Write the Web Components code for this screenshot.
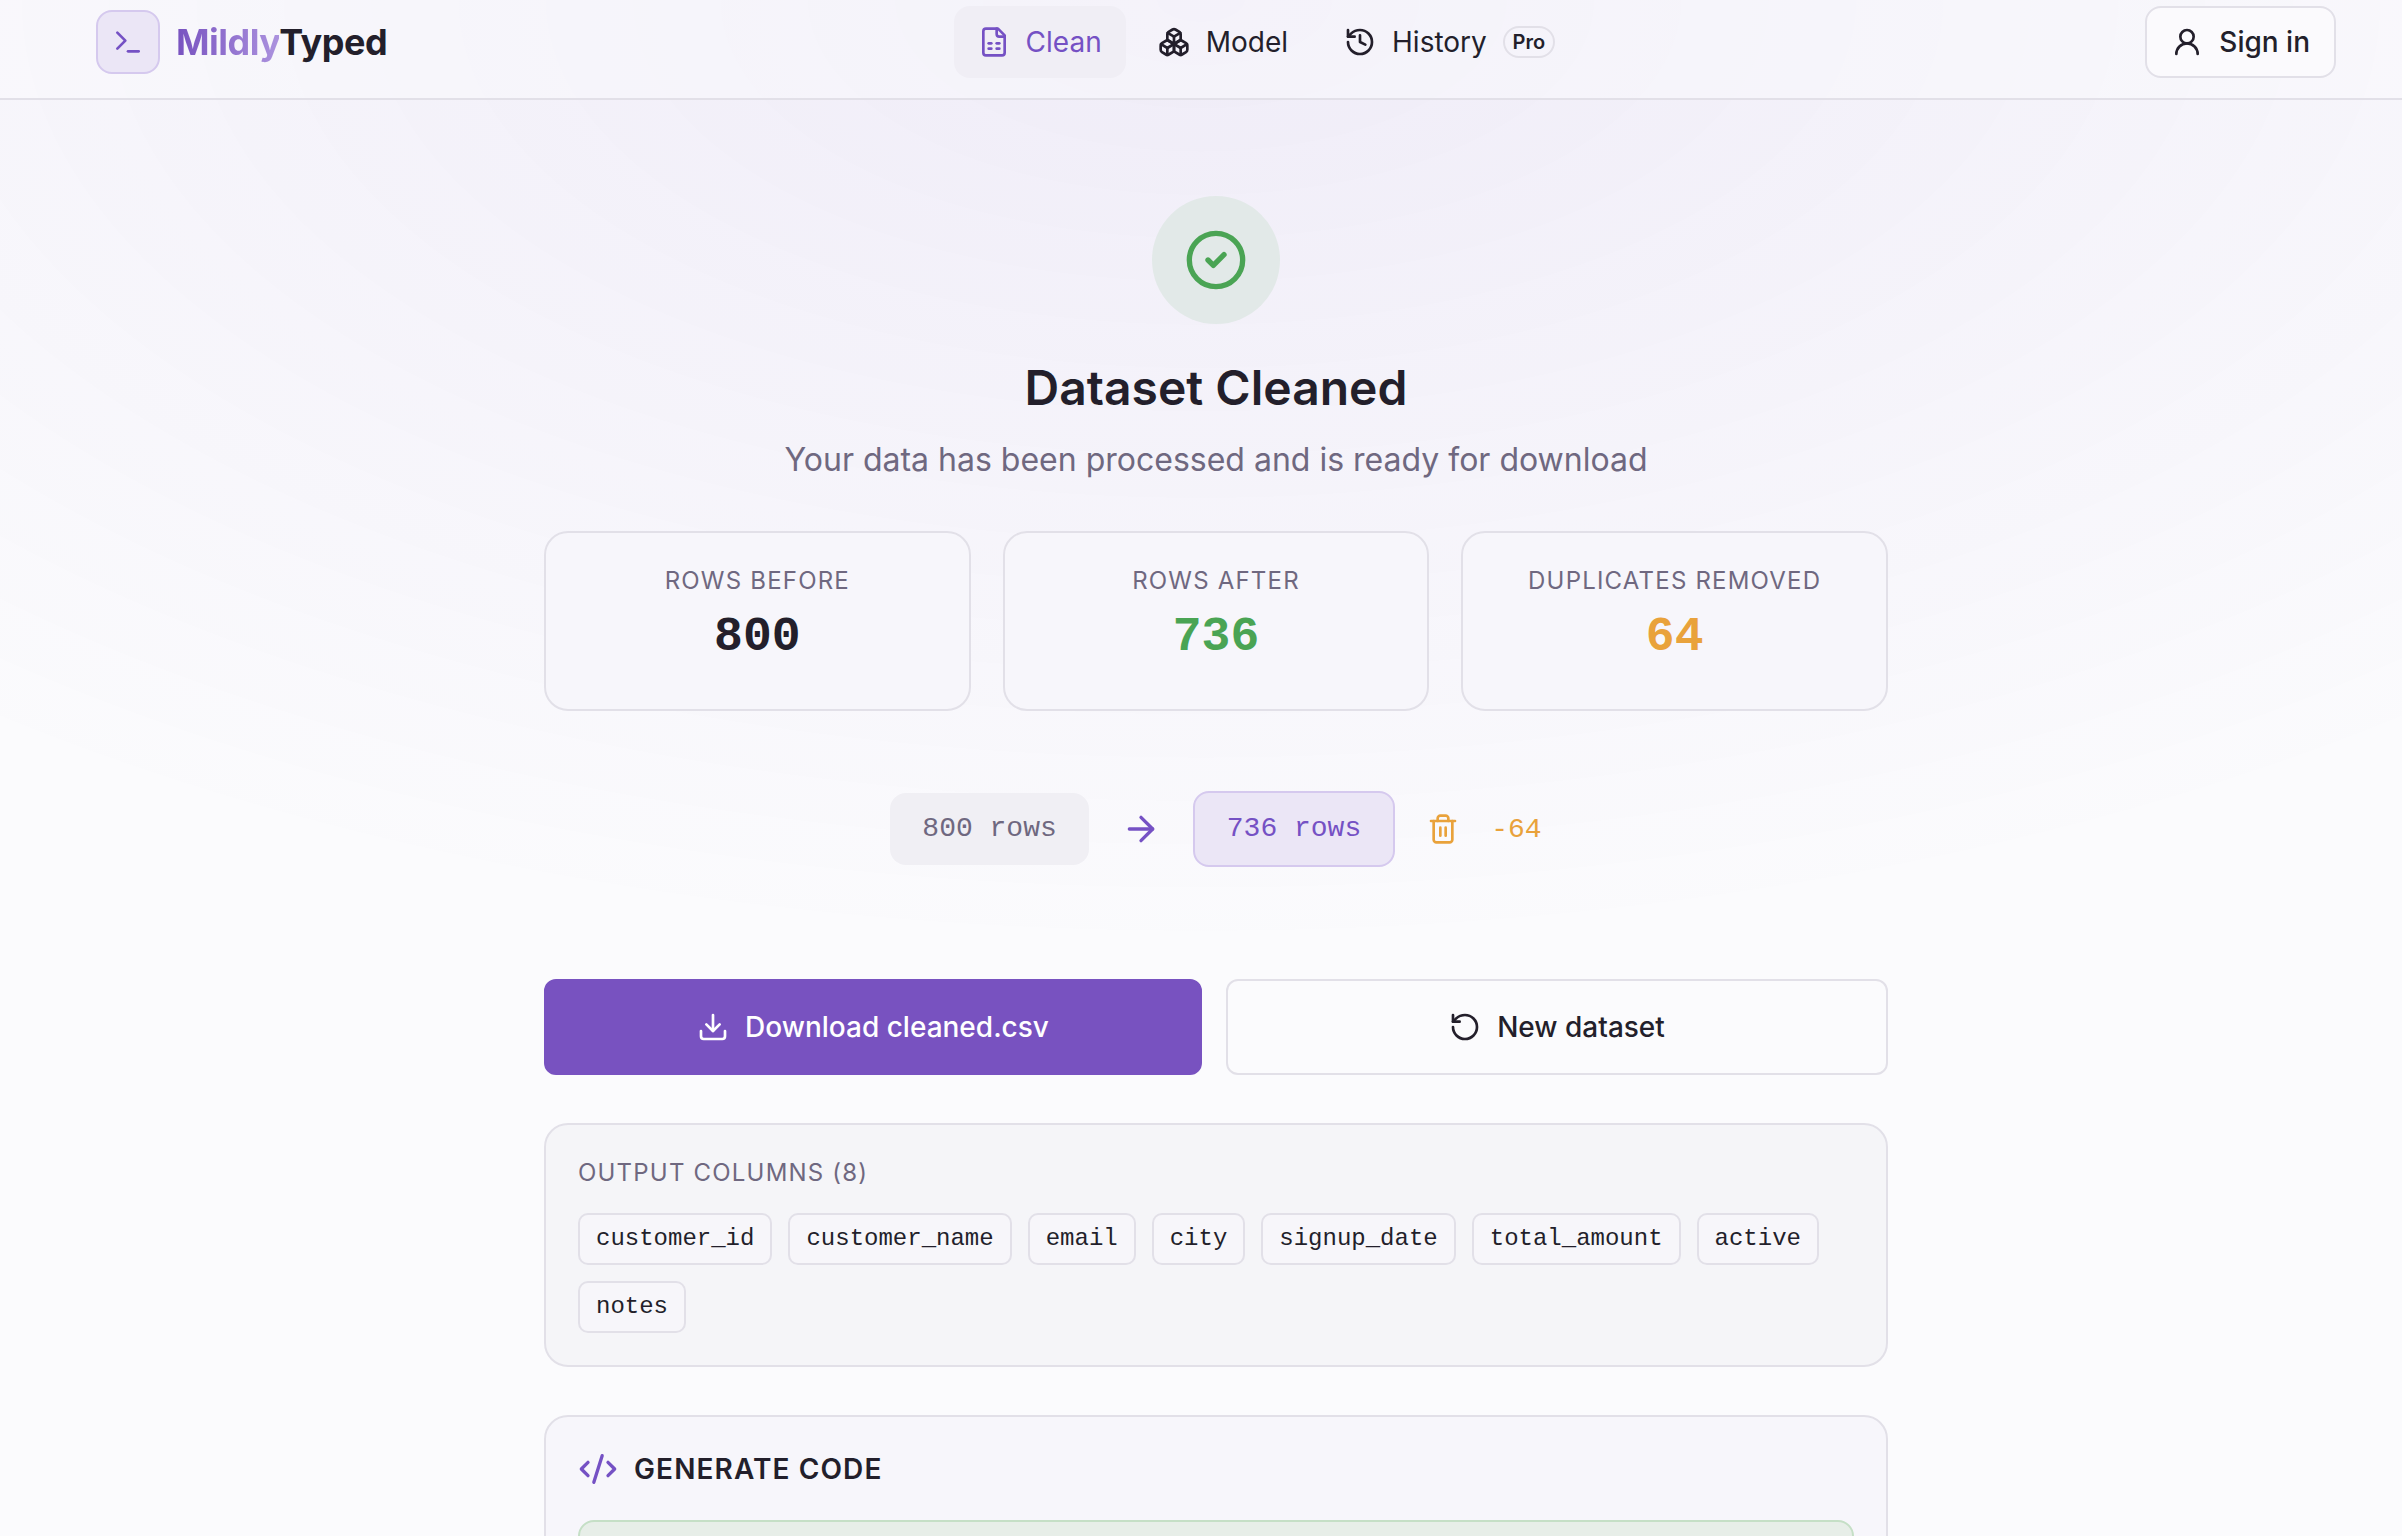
<!DOCTYPE html>
<html lang="en">
<head>
<meta charset="utf-8">
<title>MildlyTyped</title>
<style>
    html { overflow: hidden; height: 1536px; }
    body {
        margin: 0;
        width: 2432px;
        height: 1536px;
        overflow: hidden;
        font-family: Inter, "Liberation Sans", sans-serif;
        color: #231f2b;
        background-color: #fbfbfd;
        background-image: radial-gradient(ellipse 80% 62% at 50% 0, rgba(120, 82, 192, 0.085), rgba(120, 82, 192, 0));
    }
</style>
</head>
<body>
<mt-header></mt-header>
<mt-main>
    <mt-success title="Dataset Cleaned" text="Your data has been processed and is ready for download"></mt-success>
    <mt-stats>
        <stat-card label="ROWS BEFORE" value="800"></stat-card>
        <stat-card label="ROWS AFTER" value="736" color="#4aa454"></stat-card>
        <stat-card label="DUPLICATES REMOVED" value="64" color="#e9a23b"></stat-card>
    </mt-stats>
    <diff-row></diff-row>
    <mt-actions>
        <action-button primary icon="download" style="flex: 658 0 0">Download cleaned.csv</action-button>
        <action-button icon="rotate" style="flex: 662 0 0">New dataset</action-button>
    </mt-actions>
    <columns-card label="OUTPUT COLUMNS (8)">
        <col-chip>customer_id</col-chip>
        <col-chip>customer_name</col-chip>
        <col-chip>email</col-chip>
        <col-chip>city</col-chip>
        <col-chip>signup_date</col-chip>
        <col-chip>total_amount</col-chip>
        <col-chip>active</col-chip>
        <col-chip>notes</col-chip>
    </columns-card>
    <code-card></code-card>
</mt-main>

<script>
const MONO = '"Liberation Mono", monospace';

const ICONS = {
    terminal: '<path d="m4 17 6-6-6-6"/><path d="M12 19h8"/>',
    file: '<path d="M15 2H6a2 2 0 0 0-2 2v16a2 2 0 0 0 2 2h12a2 2 0 0 0 2-2V7Z"/><path d="M14 2v4a2 2 0 0 0 2 2h4"/><path d="M8 13h2"/><path d="M14 13h2"/><path d="M8 17h2"/><path d="M14 17h2"/>',
    boxes: '<path d="M2.97 12.92A2 2 0 0 0 2 14.63v3.24a2 2 0 0 0 .97 1.71l3 1.8a2 2 0 0 0 2.06 0L12 19v-5.5l-5-3-4.03 2.42Z"/><path d="m7 16.5-4.74-2.85"/><path d="m7 16.5 5-3"/><path d="M7 16.5v5.17"/><path d="M12 13.5V19l3.97 2.38a2 2 0 0 0 2.06 0l3-1.8a2 2 0 0 0 .97-1.71v-3.24a2 2 0 0 0-.97-1.71L17 10.5l-5 3Z"/><path d="m17 16.5-5-3"/><path d="m17 16.5 4.74-2.85"/><path d="M17 16.5v5.17"/><path d="M7.97 4.42A2 2 0 0 0 7 6.13v4.37l5 3 5-3V6.13a2 2 0 0 0-.97-1.71l-3-1.8a2 2 0 0 0-2.06 0l-3 1.8Z"/><path d="M12 8 7.26 5.15"/><path d="m12 8 4.74-2.85"/><path d="M12 13.5V8"/>',
    history: '<path d="M3 12a9 9 0 1 0 9-9 9.75 9.75 0 0 0-6.74 2.74L3 8"/><path d="M3 3v5h5"/><path d="M12 7v5l4 2"/>',
    user: '<circle cx="12" cy="8" r="5"/><path d="M20 21a8 8 0 0 0-16 0"/>',
    check: '<circle cx="12" cy="12" r="10"/><path d="m9 12 2 2 4-4"/>',
    arrow: '<path d="M5 12h14"/><path d="m12 5 7 7-7 7"/>',
    trash: '<path d="M3 6h18"/><path d="M19 6v14c0 1-1 2-2 2H7c-1 0-2-1-2-2V6"/><path d="M8 6V4c0-1 1-2 2-2h4c1 0 2 1 2 2v2"/><path d="M10 11v6"/><path d="M14 11v6"/>',
    download: '<path d="M21 15v4a2 2 0 0 1-2 2H5a2 2 0 0 1-2-2v-4"/><path d="m7 10 5 5 5-5"/><path d="M12 15V3"/>',
    rotate: '<path d="M3 12a9 9 0 1 0 9-9 9.75 9.75 0 0 0-6.74 2.74L3 8"/><path d="M3 3v5h5"/>',
    code: '<path d="m18 16 4-4-4-4"/><path d="m6 8-4 4 4 4"/><path d="m14.5 4-5 16"/>'
};

class MtIcon extends HTMLElement {
    connectedCallback() {
        const size = this.getAttribute('size') || 32;
        const name = this.getAttribute('name');
        this.attachShadow({ mode: 'open' });
        this.shadowRoot.innerHTML = `
            <style>
                :host { display: inline-flex; flex: none; width: ${size}px; height: ${size}px; }
                svg { display: block; width: 100%; height: 100%; }
            </style>
            <svg viewBox="0 0 24 24" fill="none" stroke="currentColor" stroke-width="2" stroke-linecap="round" stroke-linejoin="round">${ICONS[name]}</svg>
        `;
    }
}

class NavItem extends HTMLElement {
    connectedCallback() {
        this.attachShadow({ mode: 'open' });
        this.shadowRoot.innerHTML = `
            <style>
                :host {
                    display: flex;
                    align-items: center;
                    gap: 16px;
                    height: 72px;
                    padding: 0 24px;
                    border-radius: 16px;
                    font-size: 28px;
                    line-height: 40px;
                    color: #231f2b;
                }
                :host([active]) { background: #f0eef5; color: #7551c4; }
            </style>
            <mt-icon name="${this.getAttribute('icon')}"></mt-icon>
            <slot></slot>
        `;
    }
}

class ProBadge extends HTMLElement {
    constructor() {
        super();
        this.attachShadow({ mode: 'open' });
        this.shadowRoot.innerHTML = `
            <style>
                :host {
                    display: block;
                    box-sizing: border-box;
                    width: 52px;
                    height: 32px;
                    border: 2px solid #e2e0e8;
                    border-radius: 999px;
                    text-align: center;
                    font-size: 20px;
                    font-weight: 600;
                    line-height: 28px;
                }
            </style>
            <slot></slot>
        `;
    }
}

class MtHeader extends HTMLElement {
    constructor() {
        super();
        this.attachShadow({ mode: 'open' });
        this.shadowRoot.innerHTML = `
            <style>
                :host {
                    display: flex;
                    align-items: center;
                    justify-content: space-between;
                    box-sizing: border-box;
                    height: 100px;
                    padding: 6px 96px 20px;
                    border-bottom: 2px solid #e2e0e8;
                    background: rgba(250, 250, 253, 0.45);
                }
                .brand { display: flex; align-items: center; gap: 16px; }
                .logo {
                    box-sizing: border-box;
                    display: flex;
                    align-items: center;
                    justify-content: center;
                    width: 64px;
                    height: 64px;
                    border: 2px solid #d5c9ee;
                    border-radius: 16px;
                    background: #ebe6f6;
                    color: #7551c4;
                }
                .name { font-size: 36px; font-weight: 700; letter-spacing: -0.5px; line-height: 44px; }
                .name span {
                    background: linear-gradient(90deg, #7852c0, #ab92de);
                    -webkit-background-clip: text;
                    background-clip: text;
                    color: transparent;
                }
                nav { display: flex; align-items: center; gap: 8px; }
                .signin {
                    box-sizing: border-box;
                    display: flex;
                    align-items: center;
                    gap: 16px;
                    height: 72px;
                    padding: 0 24px;
                    border: 2px solid #e2e0e8;
                    border-radius: 16px;
                    background: #fbfafd;
                    font-size: 28px;
                    font-weight: 500;
                }
            </style>
            <div class="brand">
                <div class="logo"><mt-icon name="terminal"></mt-icon></div>
                <div class="name"><span>Mildly</span>Typed</div>
            </div>
            <nav>
                <nav-item icon="file" active>Clean</nav-item>
                <nav-item icon="boxes">Model</nav-item>
                <nav-item icon="history">History <pro-badge>Pro</pro-badge></nav-item>
            </nav>
            <div class="signin"><mt-icon name="user"></mt-icon>Sign in</div>
        `;
    }
}

class MtMain extends HTMLElement {
    constructor() {
        super();
        this.attachShadow({ mode: 'open' });
        this.shadowRoot.innerHTML = `
            <style>
                :host {
                    display: block;
                    width: 1344px;
                    margin: 0 auto;
                    padding-top: 96px;
                }
            </style>
            <slot></slot>
        `;
    }
}

class MtSuccess extends HTMLElement {
    connectedCallback() {
        this.attachShadow({ mode: 'open' });
        this.shadowRoot.innerHTML = `
            <style>
                :host { display: flex; flex-direction: column; align-items: center; }
                .circle {
                    display: flex;
                    align-items: center;
                    justify-content: center;
                    width: 128px;
                    height: 128px;
                    border-radius: 50%;
                    background: #e2e9e8;
                    color: #4aa454;
                }
                h1 { margin: 32px 0 0; font-size: 48px; font-weight: 600; line-height: 64px; }
                p { margin: 16px 0 0; font-size: 32px; line-height: 48px; color: #6f6880; }
            </style>
            <div class="circle"><mt-icon name="check" size="64"></mt-icon></div>
            <h1>${this.getAttribute('title')}</h1>
            <p>${this.getAttribute('text')}</p>
        `;
    }
}

class MtStats extends HTMLElement {
    constructor() {
        super();
        this.attachShadow({ mode: 'open' });
        this.shadowRoot.innerHTML = `
            <style>
                :host { display: grid; grid-template-columns: repeat(3, 1fr); gap: 32px; margin-top: 47px; }
            </style>
            <slot></slot>
        `;
    }
}

class StatCard extends HTMLElement {
    connectedCallback() {
        this.attachShadow({ mode: 'open' });
        this.shadowRoot.innerHTML = `
            <style>
                :host {
                    display: block;
                    box-sizing: border-box;
                    height: 180px;
                    padding: 32px 0 0;
                    border: 2px solid #e2e0e8;
                    border-radius: 24px;
                    background: #f7f6fb;
                    text-align: center;
                }
                .label { font-size: 24px; line-height: 32px; letter-spacing: 1.2px; color: #6f6880; }
                .value {
                    margin-top: 8px;
                    font-family: ${MONO};
                    font-size: 48px;
                    font-weight: 700;
                    line-height: 64px;
                    color: ${this.getAttribute('color') || '#231f2b'};
                }
            </style>
            <div class="label">${this.getAttribute('label')}</div>
            <div class="value">${this.getAttribute('value')}</div>
        `;
    }
}

class DiffRow extends HTMLElement {
    constructor() {
        super();
        this.attachShadow({ mode: 'open' });
        this.shadowRoot.innerHTML = `
            <style>
                :host {
                    display: flex;
                    align-items: center;
                    justify-content: center;
                    gap: 32px;
                    margin-top: 80px;
                    font-family: ${MONO};
                    font-size: 28px;
                }
                .pill { box-sizing: border-box; border-radius: 16px; line-height: 40px; }
                .old { padding: 16px 32px; background: #f0eff4; color: #6f6880; }
                .new { padding: 16px 32px; border: 2px solid #d5c9ee; background: #ebe6f6; color: #7551c4; }
                .arrow { color: #7551c4; }
                .gone { color: #e9a23b; }
            </style>
            <div class="pill old">800 rows</div>
            <mt-icon class="arrow" name="arrow" size="40"></mt-icon>
            <div class="pill new">736 rows</div>
            <mt-icon class="gone" name="trash"></mt-icon>
            <div class="gone">-64</div>
        `;
    }
}

class MtActions extends HTMLElement {
    constructor() {
        super();
        this.attachShadow({ mode: 'open' });
        this.shadowRoot.innerHTML = `
            <style>
                :host { display: flex; gap: 24px; margin-top: 112px; }
            </style>
            <slot></slot>
        `;
    }
}

class ActionButton extends HTMLElement {
    connectedCallback() {
        this.attachShadow({ mode: 'open' });
        this.shadowRoot.innerHTML = `
            <style>
                :host {
                    display: flex;
                    align-items: center;
                    justify-content: center;
                    gap: 16px;
                    box-sizing: border-box;
                    height: 96px;
                    border: 2px solid #e2e0e8;
                    border-radius: 12px;
                    font-size: 28px;
                    font-weight: 500;
                    color: #231f2b;
                }
                :host([primary]) { background: #7852c0; border-color: #7852c0; color: #fff; }
            </style>
            <mt-icon name="${this.getAttribute('icon')}"></mt-icon>
            <slot></slot>
        `;
    }
}

class ColumnsCard extends HTMLElement {
    connectedCallback() {
        this.attachShadow({ mode: 'open' });
        this.shadowRoot.innerHTML = `
            <style>
                :host {
                    display: block;
                    box-sizing: border-box;
                    margin-top: 48px;
                    padding: 32px;
                    border: 2px solid #e2e0e8;
                    border-radius: 24px;
                    background: #f5f5f8;
                }
                .label { font-size: 24px; line-height: 32px; letter-spacing: 1.2px; color: #6f6880; }
                .chips { display: flex; flex-wrap: wrap; gap: 16px; margin-top: 24px; }
            </style>
            <div class="label">${this.getAttribute('label')}</div>
            <div class="chips"><slot></slot></div>
        `;
    }
}

class ColChip extends HTMLElement {
    constructor() {
        super();
        this.attachShadow({ mode: 'open' });
        this.shadowRoot.innerHTML = `
            <style>
                :host {
                    display: block;
                    box-sizing: border-box;
                    height: 52px;
                    padding: 0 16px;
                    border: 2px solid #e2e0e8;
                    border-radius: 10px;
                    background: #f7f6fa;
                    font-family: ${MONO};
                    font-size: 24px;
                    line-height: 48px;
                    color: #231f2b;
                }
            </style>
            <slot></slot>
        `;
    }
}

class CodeCard extends HTMLElement {
    constructor() {
        super();
        this.attachShadow({ mode: 'open' });
        this.shadowRoot.innerHTML = `
            <style>
                :host {
                    display: block;
                    box-sizing: border-box;
                    height: 200px;
                    margin-top: 48px;
                    padding: 32px;
                    border: 2px solid #e2e0e8;
                    border-radius: 24px;
                    background: #f7f6fb;
                }
                .title {
                    display: flex;
                    align-items: center;
                    gap: 16px;
                    height: 40px;
                    font-size: 28px;
                    font-weight: 600;
                    letter-spacing: 1.1px;
                }
                .title mt-icon { color: #7551c4; }
                .note {
                    height: 120px;
                    margin-top: 31px;
                    border: 2px solid #c5dfc6;
                    border-radius: 16px;
                    background: #e7eee8;
                }
            </style>
            <div class="title"><mt-icon name="code" size="40"></mt-icon>GENERATE CODE</div>
            <div class="note"></div>
        `;
    }
}

customElements.define('mt-icon', MtIcon);
customElements.define('nav-item', NavItem);
customElements.define('pro-badge', ProBadge);
customElements.define('mt-header', MtHeader);
customElements.define('mt-main', MtMain);
customElements.define('mt-success', MtSuccess);
customElements.define('mt-stats', MtStats);
customElements.define('stat-card', StatCard);
customElements.define('diff-row', DiffRow);
customElements.define('mt-actions', MtActions);
customElements.define('action-button', ActionButton);
customElements.define('columns-card', ColumnsCard);
customElements.define('col-chip', ColChip);
customElements.define('code-card', CodeCard);
</script>
</body>
</html>
